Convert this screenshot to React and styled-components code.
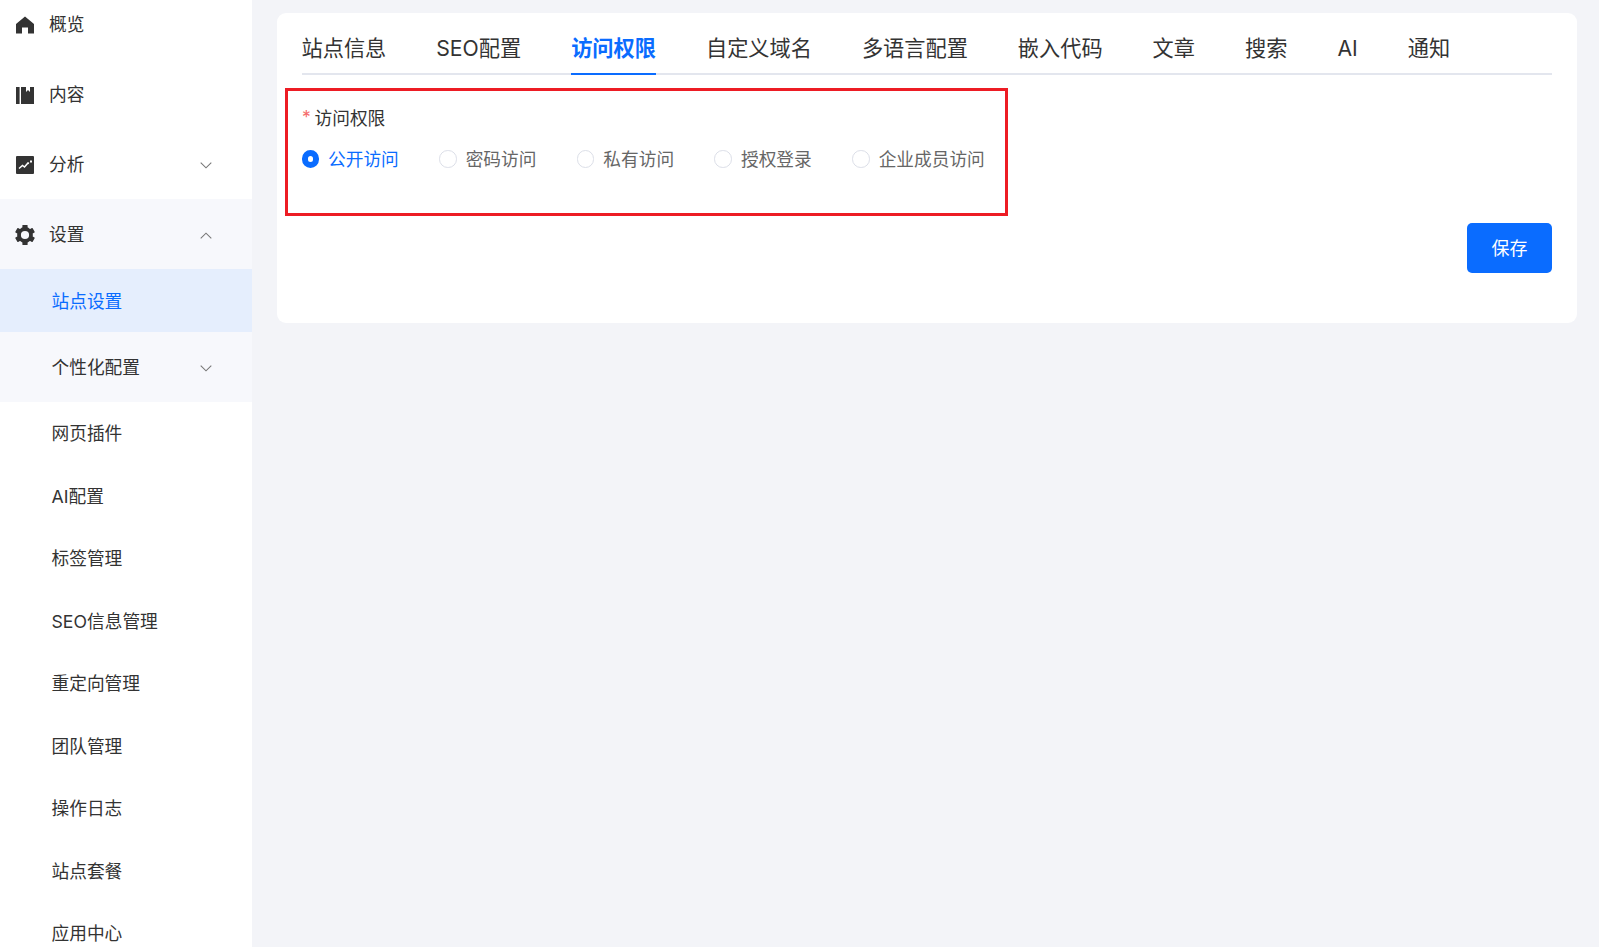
import React from 'react';
import styled, { createGlobalStyle } from 'styled-components';

const BLUE = '#0a6cff';
const FONT = '"Inter", "Noto Sans CJK SC", "Noto Sans", sans-serif';

const GlobalStyle = createGlobalStyle`
  html, body {
    margin: 0;
    padding: 0;
    background: #f3f4f8;
    font-family: ${FONT};
  }
  * { box-sizing: border-box; }
`;

const Shell = styled.div`
  display: flex;
  align-items: flex-start;
  height: 100vh;
  overflow: hidden;
  background: #f3f4f8;
`;

const Sidebar = styled.nav`
  flex: 0 0 252px;
  margin-top: -11px;
  background: #fff;
`;

const MenuRow = styled.div`
  display: flex;
  align-items: center;
  height: 70px;
  padding: 2px 40px 0 15px;
  font-size: 17.7px;
  color: #333;
  background: ${p => (p.$open ? '#f7f8fc' : 'transparent')};
`;

const IconSlot = styled.span`
  display: flex;
  align-items: center;
  justify-content: center;
  width: 20px;
  height: 20px;
  margin-right: 14px;
`;

const RowLabel = styled.span`
  flex: 1;
  line-height: 24px;
`;

const SubGroup = styled.div`
  background: #f7f8fc;
`;

const SubRow = styled.div`
  display: flex;
  align-items: center;
  height: ${p => (p.$tall ? '70px' : p.$active ? '63px' : '62.5px')};
  padding: ${p => (p.$tall ? '2px' : '0')} 40px ${p => (p.$tall ? '0' : p.$active ? '1px' : '2px')} 51.5px;
  font-size: 17.7px;
  color: ${p => (p.$active ? BLUE : '#333')};
  background: ${p => (p.$active ? '#e5eefd' : 'transparent')};
`;

const Main = styled.main`
  flex: 1;
  padding: 13px 22px 0 25px;
`;

const Card = styled.section`
  background: #fff;
  border-radius: 9px;
  padding: 0 25px 50px;
`;

const TabStrip = styled.div`
  display: flex;
  gap: 50px;
  height: 62px;
  padding-top: 20.5px;
  border-bottom: 2.5px solid #e3e6ee;
`;

const Tab = styled.div`
  height: 41.5px;
  line-height: 28px;
  font-size: 21.2px;
  white-space: nowrap;
  color: ${p => (p.$active ? BLUE : '#333')};
  font-weight: ${p => (p.$active ? 700 : 400)};
  border-bottom: 2.5px solid ${p => (p.$active ? BLUE : 'transparent')};

  &:first-child {
    margin-left: -0.5px;
  }
`;

const Form = styled.div`
  position: relative;
  padding-top: 27.5px;
`;

const FieldLabel = styled.div`
  display: flex;
  align-items: center;
  height: 28px;
  font-size: 17.7px;
  color: #333;
`;

const Required = styled.span`
  width: 12.5px;
  color: #f56c6c;
  font-size: 17.5px;
`;

const RadioGroup = styled.div`
  display: flex;
  gap: 40.4px;
  margin: 13.5px 0 0 -0.5px;
`;

const RadioItem = styled.label`
  display: flex;
  align-items: center;
  gap: 9px;
  height: 28px;
  font-size: 17.7px;
  color: ${p => (p.$checked ? BLUE : '#666')};
`;

const RadioDot = styled.span`
  width: 17.5px;
  height: 17.5px;
  border-radius: 50%;
  background: #fff;
  border: ${p => (p.$checked ? `6px solid ${BLUE}` : '1px solid #dcdfe8')};
  transform: translateY(1px);
`;

const Highlight = styled.div`
  position: absolute;
  top: 13px;
  left: -17px;
  width: 723px;
  height: 128px;
  border: 3px solid #ed1c24;
  pointer-events: none;
`;

const Actions = styled.div`
  display: flex;
  justify-content: flex-end;
  margin-top: 51px;
`;

const SaveButton = styled.button`
  width: 85px;
  height: 50px;
  padding: 0 0 2px;
  border: 0;
  border-radius: 5px;
  background: ${BLUE};
  color: #fff;
  font-family: ${FONT};
  font-size: 18px;
`;

const Chevron = ({ up }) => (
  <svg width="12" height="7" viewBox="0 0 12 7" fill="none" stroke="#777" strokeWidth="1.1">
    <path d={up ? 'M0.7 6.3 L6 1.2 L11.3 6.3' : 'M0.7 0.7 L6 5.8 L11.3 0.7'} />
  </svg>
);

const HomeIcon = () => (
  <svg width="18" height="18" viewBox="0 0 18 18" fill="#333">
    <path d="M9 0.5 L18 8 V17.5 H12 V11.5 H6 V17.5 H0 V8 Z" />
  </svg>
);

const BookIcon = () => (
  <svg width="18" height="17" viewBox="0 0 18 17" fill="#333">
    <rect x="0" y="0" width="3.6" height="17" />
    <path d="M5 0 H10 V5 L12 3 L14 5 V0 H18 V17 H5 Z" />
  </svg>
);

const ChartIcon = () => (
  <svg width="18" height="18" viewBox="0 0 18 18">
    <rect width="18" height="18" rx="1" fill="#333" />
    <path d="M3 12.5 L6.5 9.5 L8.5 11 L12 7 L13 7.5" fill="none" stroke="#fff" strokeWidth="1.5" />
    <rect x="14" y="4.5" width="2" height="2" fill="#fff" />
  </svg>
);

const GearIcon = () => (
  <svg width="20" height="20" viewBox="0 0 20 20" fill="#333">
    <circle cx="10" cy="10" r="6" fill="none" stroke="#333" strokeWidth="3.8" />
    {[0, 60, 120, 180, 240, 300].map(a => (
      <rect key={a} x="7.4" y="0" width="5.2" height="3.6" rx="0.6" transform={`rotate(${a} 10 10)`} />
    ))}
  </svg>
);

const subItems = ['网页插件', 'AI配置', '标签管理', 'SEO信息管理', '重定向管理', '团队管理', '操作日志', '站点套餐', '应用中心'];
const tabs = ['站点信息', 'SEO配置', '访问权限', '自定义域名', '多语言配置', '嵌入代码', '文章', '搜索', 'AI', '通知'];
const radios = ['公开访问', '密码访问', '私有访问', '授权登录', '企业成员访问'];

export default function App() {
  return (
    <>
      <GlobalStyle />
      <Shell>
        <Sidebar>
          <MenuRow><IconSlot><HomeIcon /></IconSlot><RowLabel>概览</RowLabel></MenuRow>
          <MenuRow><IconSlot><BookIcon /></IconSlot><RowLabel>内容</RowLabel></MenuRow>
          <MenuRow><IconSlot><ChartIcon /></IconSlot><RowLabel>分析</RowLabel><Chevron /></MenuRow>
          <MenuRow $open><IconSlot><GearIcon /></IconSlot><RowLabel>设置</RowLabel><Chevron up /></MenuRow>
          <SubGroup>
            <SubRow $active>站点设置</SubRow>
            <SubRow $tall><RowLabel>个性化配置</RowLabel><Chevron /></SubRow>
          </SubGroup>
          {subItems.map(item => <SubRow key={item}>{item}</SubRow>)}
        </Sidebar>
        <Main>
          <Card>
            <TabStrip>
              {tabs.map(tab => <Tab key={tab} $active={tab === '访问权限'}>{tab}</Tab>)}
            </TabStrip>
            <Form>
              <FieldLabel><Required>*</Required>访问权限</FieldLabel>
              <RadioGroup>
                {radios.map((radio, i) => (
                  <RadioItem key={radio} $checked={i === 0}>
                    <RadioDot $checked={i === 0} />
                    {radio}
                  </RadioItem>
                ))}
              </RadioGroup>
              <Highlight />
              <Actions><SaveButton>保存</SaveButton></Actions>
            </Form>
          </Card>
        </Main>
      </Shell>
    </>
  );
}
